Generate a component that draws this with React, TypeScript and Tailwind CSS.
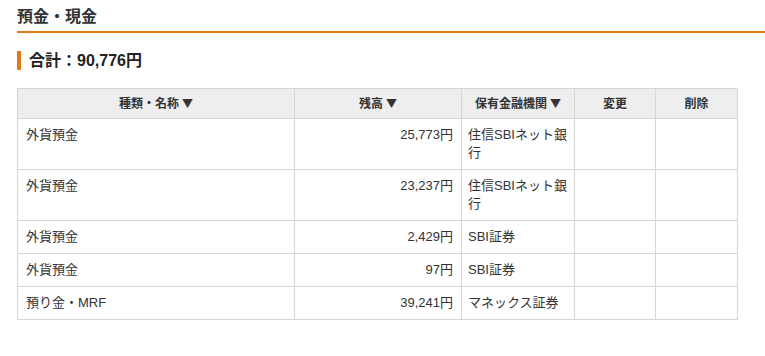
const rows = [
  { name: '外貨預金', amount: '25,773円', bank: '住信SBIネット銀行' },
  { name: '外貨預金', amount: '23,237円', bank: '住信SBIネット銀行' },
  { name: '外貨預金', amount: '2,429円', bank: 'SBI証券' },
  { name: '外貨預金', amount: '97円', bank: 'SBI証券' },
  { name: '預り金・MRF', amount: '39,241円', bank: 'マネックス証券' },
];

const cell = 'border border-[#d6d6d6] align-top py-[7px] leading-[18px]';
const head = 'border border-[#d6d6d6] h-[30px] bg-[#eeeeee] text-center text-[12px] font-bold text-[#333]';

function Arrow() {
  return (
    <span className="ml-[3px] text-[11px]" style={{ fontFamily: '"Noto Sans CJK JP", sans-serif' }}>
      ▼
    </span>
  );
}

export default function App() {
  return (
    <div
      className="min-h-[356px] bg-white pl-[17px] text-[#333]"
      style={{ fontFamily: '"Liberation Sans", "Noto Sans CJK JP", sans-serif' }}
    >
      <div className="border-b-2 border-[#e07a16] pt-[6px] pb-[3px]">
        <h1 className="text-[16px] font-bold leading-[22px]">預金・現金</h1>
      </div>

      <div className="mt-[18px] flex items-center">
        <span className="h-[19px] w-[4px] bg-[#e07a16]" />
        <h2 className="ml-[8px] text-[16px] font-semibold leading-[19px] text-[#222]">合計：90,776円</h2>
      </div>

      <table className="mt-[18px] w-[720px] table-fixed border-collapse text-[13px]">
        <colgroup>
          <col className="w-[277px]" />
          <col className="w-[167px]" />
          <col className="w-[113px]" />
          <col className="w-[81px]" />
          <col className="w-[82px]" />
        </colgroup>
        <thead>
          <tr>
            <th className={head}>種類・名称<Arrow /></th>
            <th className={head}>残高<Arrow /></th>
            <th className={head}>保有金融機関<Arrow /></th>
            <th className={head}>変更</th>
            <th className={head}>削除</th>
          </tr>
        </thead>
        <tbody>
          {rows.map((r, i) => (
            <tr key={i}>
              <td className={`${cell} px-2`}>{r.name}</td>
              <td className={`${cell} px-2 text-right`}>{r.amount}</td>
              <td className={`${cell} px-[6px]`}>{r.bank}</td>
              <td className={cell} />
              <td className={cell} />
            </tr>
          ))}
        </tbody>
      </table>
    </div>
  );
}
